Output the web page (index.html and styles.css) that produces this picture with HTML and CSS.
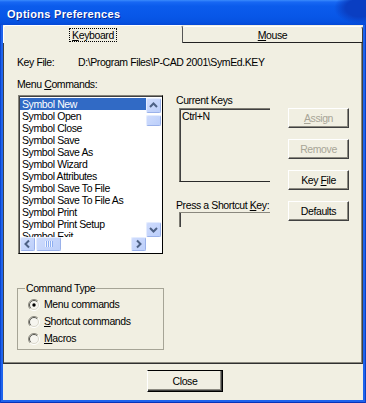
FILE: index.html
```html
<!DOCTYPE html>
<html>
<head>
<meta charset="utf-8">
<title>Options Preferences</title>
<link rel="stylesheet" href="styles.css">
</head>
<body>
<div class="window">
  <div class="titlebar"><span class="title">Options Preferences</span></div>
  <div class="client">
    <div class="tabctl">
      <div class="tabstrip">
        <div class="tab active"><span class="focus"><u>K</u>eyboard</span></div>
        <div class="tab inactive"><span class="tab-text"><u>M</u>ouse</span></div>
      </div>
      <div class="panel">
        <div class="keyfile"><span class="kf-label">Key File:</span><span>D:\Program Files\P-CAD 2001\SymEd.KEY</span></div>
        <div class="main">
          <div class="col-list">
            <div class="label">Menu <u>C</u>ommands:</div>
            <div class="listbox">
              <div class="items">
                <div class="item sel">Symbol New</div>
                <div class="item">Symbol Open</div>
                <div class="item">Symbol Close</div>
                <div class="item">Symbol Save</div>
                <div class="item">Symbol Save As</div>
                <div class="item">Symbol Wizard</div>
                <div class="item">Symbol Attributes</div>
                <div class="item">Symbol Save To File</div>
                <div class="item">Symbol Save To File As</div>
                <div class="item">Symbol Print</div>
                <div class="item">Symbol Print Setup</div>
                <div class="item">Symbol Exit</div>
              </div>
              <div class="vscroll">
                <div class="sb-btn sq"><svg width="13" height="13" viewBox="0 0 13 13"><polyline points="3,8 6.5,4.5 10,8" fill="none" stroke="#4D6185" stroke-width="2"/></svg></div>
                <div class="sb-thumb vthumb"></div>
                <div class="sb-space"></div>
                <div class="sb-btn sq"><svg width="13" height="13" viewBox="0 0 13 13"><polyline points="3,5 6.5,8.5 10,5" fill="none" stroke="#4D6185" stroke-width="2"/></svg></div>
              </div>
              <div class="hscroll">
                <div class="sb-btn hb"><svg width="13" height="12" viewBox="0 0 13 12"><polyline points="8,2.5 4.5,6 8,9.5" fill="none" stroke="#4D6185" stroke-width="2"/></svg></div>
                <div class="sb-thumb hthumb"><svg width="8" height="6" viewBox="0 0 8 6"><path d="M0.5 0V6M2.5 0V6M4.5 0V6M6.5 0V6" stroke="#EEF3FE" stroke-width="1"/><path d="M1.5 0V6M3.5 0V6M5.5 0V6M7.5 0V6" stroke="#8DAEF1" stroke-width="1"/></svg></div>
                <div class="sb-space"></div>
                <div class="sb-btn hb"><svg width="13" height="12" viewBox="0 0 13 12"><polyline points="5,2.5 8.5,6 5,9.5" fill="none" stroke="#4D6185" stroke-width="2"/></svg></div>
              </div>
              <div class="corner"></div>
            </div>
          </div>
          <div class="col-keys">
            <div class="label">Current Keys</div>
            <div class="keys-box"><div class="key-item">Ctrl+N</div></div>
            <div class="label sc-label">Press a Shortcut <u>K</u>ey:</div>
            <div class="sc-input"></div>
          </div>
          <div class="col-btns">
            <div class="btn disabled"><span><u>A</u>ssign</span></div>
            <div class="btn disabled"><span>Remove</span></div>
            <div class="btn"><span>Key <u>F</u>ile</span></div>
            <div class="btn"><span>Defaults</span></div>
          </div>
        </div>
        <div class="group">
          <div class="group-title">Command Type</div>
          <div class="radios">
            <div class="radio-row">
              <svg class="radio" width="12" height="12" viewBox="0 0 12 12"><circle cx="6" cy="6" r="5" fill="#F6F5EF"/><path d="M9.9 2.1A5.5 5.5 0 0 0 2.1 9.9" fill="none" stroke="#8C8A80"/><path d="M2.1 9.9A5.5 5.5 0 0 0 9.9 2.1" fill="none" stroke="#FFFFFF"/><path d="M9.2 2.8A4.5 4.5 0 0 0 2.8 9.2" fill="none" stroke="#55554F"/><path d="M2.8 9.2A4.5 4.5 0 0 0 9.2 2.8" fill="none" stroke="#DAD8CC"/><circle cx="6" cy="6" r="1.7" fill="#000"/></svg>
              <span>Menu commands</span>
            </div>
            <div class="radio-row">
              <svg class="radio" width="12" height="12" viewBox="0 0 12 12"><circle cx="6" cy="6" r="5" fill="#F6F5EF"/><path d="M9.9 2.1A5.5 5.5 0 0 0 2.1 9.9" fill="none" stroke="#8C8A80"/><path d="M2.1 9.9A5.5 5.5 0 0 0 9.9 2.1" fill="none" stroke="#FFFFFF"/><path d="M9.2 2.8A4.5 4.5 0 0 0 2.8 9.2" fill="none" stroke="#55554F"/><path d="M2.8 9.2A4.5 4.5 0 0 0 9.2 2.8" fill="none" stroke="#DAD8CC"/></svg>
              <span><u>S</u>hortcut commands</span>
            </div>
            <div class="radio-row">
              <svg class="radio" width="12" height="12" viewBox="0 0 12 12"><circle cx="6" cy="6" r="5" fill="#F6F5EF"/><path d="M9.9 2.1A5.5 5.5 0 0 0 2.1 9.9" fill="none" stroke="#8C8A80"/><path d="M2.1 9.9A5.5 5.5 0 0 0 9.9 2.1" fill="none" stroke="#FFFFFF"/><path d="M9.2 2.8A4.5 4.5 0 0 0 2.8 9.2" fill="none" stroke="#55554F"/><path d="M2.8 9.2A4.5 4.5 0 0 0 9.2 2.8" fill="none" stroke="#DAD8CC"/></svg>
              <span><u>M</u>acros</span>
            </div>
          </div>
        </div>
      </div>
    </div>
    <div class="footer"><div class="btn close"><span>Close</span></div></div>
  </div>
</div>
</body>
</html>
```
FILE: styles.css
```css
* { box-sizing: border-box; }
html, body { margin: 0; padding: 0; }
body {
  width: 366px;
  height: 403px;
  overflow: hidden;
  font-family: "Liberation Sans", Arial, sans-serif;
  font-size: 10.5px;
  letter-spacing: -0.4px;
  color: #000;
  background: #F1EFE2;
}
u { text-decoration: underline; text-underline-offset: 1px; }

.window {
  width: 366px;
  height: 403px;
  display: flex;
  flex-direction: column;
  background: #1E63EC;
  box-shadow: inset 1px 0 #0A45D2, inset -1px 0 #0A3FC6, inset 0 -1px #0833B8;
}
.titlebar {
  height: 25px;
  flex: none;
  display: flex;
  align-items: flex-start;
  padding: 8px 0 0 7px;
  background:
    radial-gradient(ellipse 26px 16px at 360px 8px, #0A3EC2 0%, #0A3EC2 55%, rgba(10,62,194,0) 100%),
    linear-gradient(#3A8BFC 0px, #1868F4 2px, #0B5CEC 6px, #0857E8 16px, #0652E1 22px, #0549D6 25px);
}
.title {
  color: #fff;
  font-weight: bold;
  font-size: 11px;
  letter-spacing: 0.3px;
  line-height: 13px;
  text-shadow: 1px 1px #0B2B94;
}
.client {
  flex: 1;
  margin: 0 3px 3px;
  background: #F1EFE2;
  display: flex;
  flex-direction: column;
}
.tabctl {
  height: 339px;
  flex: none;
  display: flex;
  flex-direction: column;
}
.tabstrip {
  height: 18px;
  flex: none;
  display: flex;
  align-items: flex-start;
}
.tab {
  flex: none;
  width: 180px;
  display: flex;
  justify-content: center;
  align-items: flex-start;
  line-height: 12px;
  border-radius: 3px 3px 0 0;
}
.tab.active {
  height: 18px;
  border-top: 1px solid #fff;
  border-left: 1px solid #fff;
  border-right: 1px solid #555;
  padding-top: 2px;
}
.tab.inactive {
  margin-top: 1px;
  height: 17px;
  border-top: 1px solid #fff;
  border-right: 1px solid #404040;
  border-bottom: 1px solid #222;
  padding-top: 2px;
}
.focus {
  display: inline-block;
  border: 1px dotted #000;
  padding: 0 2px;
  line-height: 12px;
}
.tab-text { line-height: 12px; }

.panel {
  flex: 1;
  border-left: 1px solid #404040;
  border-right: 1px solid #404040;
  border-bottom: 1px solid #303030;
  box-shadow: inset -1px -1px #8A887E;
  padding: 13px 0 0 13px;
}
.keyfile { display: flex; line-height: 13px; }
.kf-label { width: 61px; flex: none; }
.label { line-height: 13px; white-space: nowrap; }

.main { display: flex; margin-top: 9px; }
.col-list { width: 147px; flex: none; display: flex; flex-direction: column; }
.listbox {
  width: 145px;
  height: 159px;
  margin: 4px 0 0 1px;
  background: #fff;
  border: 1px solid;
  border-color: #85837A #000 #000 #85837A;
  box-shadow: inset 1px 1px #404040;
  padding: 2px 1px 2px 1px;
  display: grid;
  grid-template-columns: 126px 15px;
  grid-template-rows: 139px 14px;
}
.items { overflow: hidden; }
.item {
  height: 12px;
  line-height: 12px;
  padding-left: 2px;
  white-space: nowrap;
}
.item.sel { background: #316AC5; color: #fff; }

.vscroll { display: flex; flex-direction: column; }
.hscroll { display: flex; }
.sb-space { flex: 1; }
.sb-btn, .sb-thumb {
  border: 1px solid;
  border-color: #E4ECFE #9AB1EA #9AB1EA #E4ECFE;
  border-radius: 2px;
  background: linear-gradient(135deg, #CFDCFD 0%, #BCCFFA 100%);
  display: flex;
  align-items: center;
  justify-content: center;
  flex: none;
}
.sb-btn.sq { width: 15px; height: 15px; }
.sb-btn.hb { width: 15px; height: 14px; }
.vthumb { width: 15px; height: 11px; margin-top: 2px; }
.hthumb { width: 25px; height: 14px; margin-left: 1px; }
.corner { background: #fff; }

.col-keys {
  width: 95px;
  flex: none;
  margin-left: 12px;
  padding-top: 16px;
  display: flex;
  flex-direction: column;
}
.keys-box {
  width: 91px;
  height: 74px;
  margin: 1px 0 0 3px;
  border-top: 1px solid #7E7C73;
  border-left: 1px solid #7E7C73;
  border-bottom: 1px solid #2A2A2A;
  box-shadow: inset 1px 1px #404040;
  padding: 1px 0 0 2px;
}
.key-item { line-height: 13px; }
.sc-label { margin-top: 17px; }
.sc-input {
  width: 91px;
  height: 15px;
  margin-left: 3px;
  border-top: 1px solid #8A887E;
  border-left: 1px solid #7E7C73;
  box-shadow: inset 1px 0 #404040;
}

.col-btns {
  flex: none;
  margin-left: 17px;
  padding-top: 30px;
  display: flex;
  flex-direction: column;
  gap: 11px;
}
.btn {
  width: 61px;
  height: 20px;
  display: flex;
  align-items: center;
  justify-content: center;
  line-height: 13px;
  border-top: 1px solid #fff;
  border-left: 1px solid #fff;
  border-right: 1px solid #404040;
  border-bottom: 1px solid #404040;
  box-shadow: inset -1px -1px #8C8A80;
  background: #F1EFE2;
  white-space: nowrap;
}
.btn.disabled { color: #A8A597; }

.group {
  width: 147px;
  height: 62px;
  margin-top: 34px;
  border: 1px solid #A6A496;
  padding-left: 10px;
}
.group-title {
  width: max-content;
  margin: -7px 0 0 -3px;
  padding: 0 1px;
  line-height: 13px;
  background: #F1EFE2;
}
.radios { margin-top: 1px; }
.radio-row {
  height: 17px;
  display: flex;
  align-items: center;
  line-height: 13px;
  white-space: nowrap;
}
.radio { flex: none; margin-right: 4px; }

.footer {
  flex: 1;
  display: flex;
  align-items: flex-start;
  padding: 6px 0 0 144px;
}
.btn.close {
  width: 76px;
  height: 22px;
  border-top: 1px solid #000;
  border-left: 1px solid #fff;
  border-right: 1px solid #000;
  border-bottom: 1px solid #000;
  box-shadow: inset -1px -1px #404040, inset -2px -2px #8C8A80;
  padding-top: 1px;
}
```
